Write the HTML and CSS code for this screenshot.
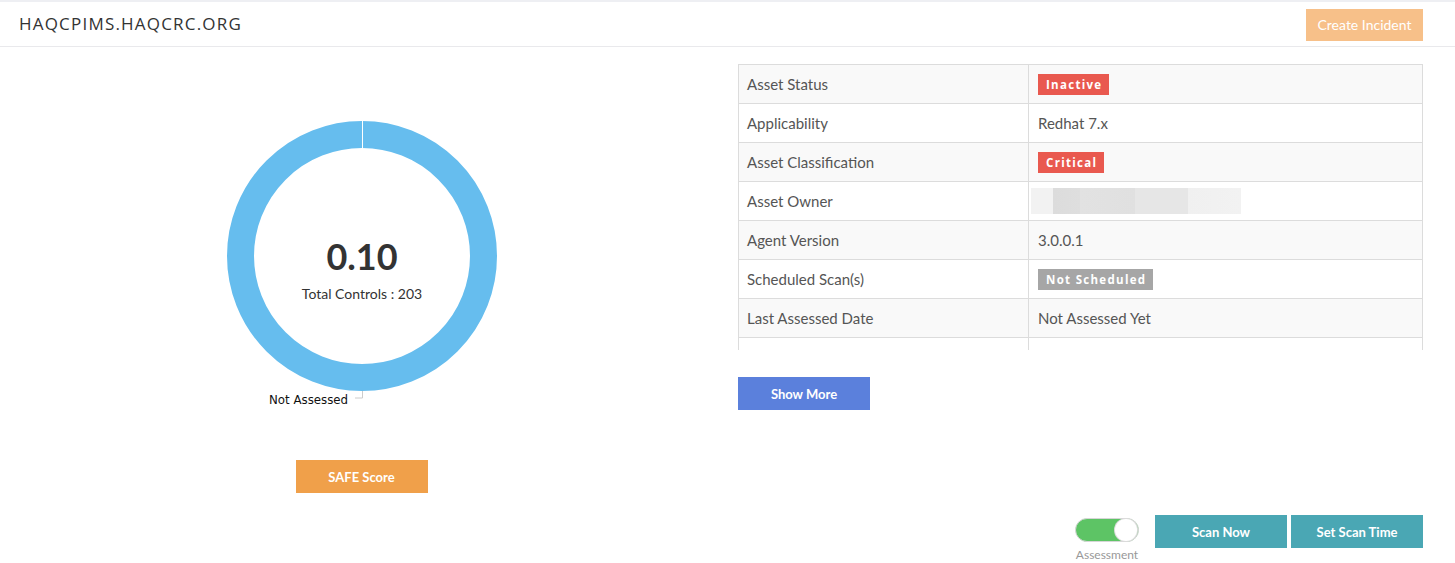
FILE: index.html
```html
<!DOCTYPE html>
<html>
<head>
<meta charset="utf-8">
<link rel="stylesheet" href="styles.css">
</head>
<body>
<div class="topband"></div>
<header class="header">
  <h1 class="title">HAQCPIMS.HAQCRC.ORG</h1>
  <button class="btn btn-incident">Create Incident</button>
</header>
<main class="main">
  <section class="left-col">
    <svg class="donut" width="270" height="290" viewBox="0 0 270 290">
      <circle cx="135" cy="135" r="121.5" fill="none" stroke="#66bdee" stroke-width="27"/>
      <line x1="135.5" y1="0" x2="135.5" y2="27" stroke="#ffffff" stroke-width="1"/>
      <text class="score" x="135" y="149" text-anchor="middle">0.10</text>
      <text class="total" x="135" y="178" text-anchor="middle">Total Controls : 203</text>
      <polyline points="135.5,270 135.5,277 128,277" fill="none" stroke="#cccccc" stroke-width="1"/>
      <text class="legend" x="42" y="283">Not Assessed</text>
    </svg>
    <button class="btn btn-safe">SAFE Score</button>
  </section>
  <section class="right-col">
    <div class="table-wrap">
      <table class="info">
        <tr><td class="k">Asset Status</td><td><span class="badge badge-red">Inactive</span></td></tr>
        <tr><td class="k">Applicability</td><td>Redhat 7.x</td></tr>
        <tr><td class="k">Asset Classification</td><td><span class="badge badge-red">Critical</span></td></tr>
        <tr><td class="k">Asset Owner</td><td class="owner-cell"><div class="blur"></div></td></tr>
        <tr><td class="k">Agent Version</td><td>3.0.0.1</td></tr>
        <tr><td class="k">Scheduled Scan(s)</td><td><span class="badge badge-gray">Not Scheduled</span></td></tr>
        <tr><td class="k">Last Assessed Date</td><td>Not Assessed Yet</td></tr>
        <tr><td class="k">&nbsp;</td><td>&nbsp;</td></tr>
      </table>
    </div>
    <button class="btn btn-more">Show More</button>
  </section>
</main>
<footer class="footer">
  <div class="toggle-group">
    <div class="toggle"><span class="knob"></span></div>
    <span class="toggle-label">Assessment</span>
  </div>
  <button class="btn btn-scan">Scan Now</button>
  <button class="btn btn-scan">Set Scan Time</button>
</footer>
</body>
</html>
```
FILE: styles.css
```css
* { box-sizing: border-box; }
html, body { margin: 0; padding: 0; background: #ffffff; }
body { font-family: "Lato", "Liberation Sans", sans-serif; color: #555; width: 1455px; height: 563px; overflow: hidden; }

.topband { height: 2px; background: #eeeff3; }

.header {
  height: 45px;
  border-bottom: 1px solid #e9e9ec;
  display: flex;
  align-items: center;
  justify-content: space-between;
  padding: 0 32px 0 19px;
}
.title {
  margin: 0;
  font-family: "Open Sans", "DejaVu Sans", sans-serif;
  font-weight: 400;
  font-size: 17px;
  letter-spacing: 1.2px;
  color: #333;
  padding-bottom: 1px;
}

.btn {
  border: none;
  color: #fff;
  font-family: "Lato", "Liberation Sans", sans-serif;
  font-size: 13px;
  font-weight: 700;
  height: 33px;
  width: 132px;
  padding: 0;
  cursor: pointer;
}
.btn-incident {
  background: #f7c089;
  width: 117px;
  height: 32px;
  font-size: 14px;
  font-weight: 400;
  margin-top: 1px;
}
.btn-safe { background: #f0a04a; margin-top: 49px; }
.btn-more { background: #5b80dc; margin-top: 27px; }
.btn-scan { background: #4aa7b4; }

.main {
  display: flex;
  gap: 15px;
  padding-top: 17px;
}
.left-col {
  width: 723px;
  display: flex;
  flex-direction: column;
  align-items: center;
}
.donut { display: block; margin-top: 57px; }
.score { font-family: "Lato", sans-serif; font-weight: 700; font-size: 36px; fill: #333; }
.total { font-family: "Lato", sans-serif; font-size: 14px; fill: #333; }
.legend { font-family: "DejaVu Sans", "Liberation Sans", sans-serif; font-size: 11.8px; fill: #111; }

.right-col {
  width: 685px;
  display: flex;
  flex-direction: column;
}
.table-wrap {
  height: 286px;
  overflow: hidden;
}
.info {
  width: 685px;
  border-collapse: collapse;
  font-size: 15px;
  color: #555;
}
.info td {
  border: 1px solid #dcdcdc;
  height: 39px;
  padding: 0 9px;
  vertical-align: middle;
  white-space: nowrap;
}
.info td.k { width: 290px; padding-left: 8px; }
.info tr:nth-child(odd) td { background: #f9f9f9; }
.owner-cell { padding-left: 2px !important; }

.badge {
  display: inline-block;
  color: #fff;
  font-family: "Open Sans", "DejaVu Sans", sans-serif;
  font-weight: 700;
  font-size: 11.5px;
  letter-spacing: 1.3px;
  line-height: 21px;
  height: 21px;
  padding: 0 7px 0 8px;
  vertical-align: middle;
}
.badge-red { background: #e9594f; }
.badge-gray { background: #a6a6a6; }

.blur {
  width: 210px;
  height: 26px;
  background: linear-gradient(90deg, #f2f2f2 0, #f2f2f2 22px, #dcdcdc 22px, #dedede 49px, #e2e2e2 49px, #e0e0e0 104px, #e6e6e6 104px, #e6e6e6 157px, #f0f0f0 157px, #f2f2f2 210px);
  filter: blur(0.4px);
}

.footer {
  display: flex;
  justify-content: flex-end;
  align-items: flex-start;
  gap: 4px;
  padding-right: 32px;
  margin-top: 22px;
}
.toggle-group {
  display: flex;
  flex-direction: column;
  align-items: center;
  margin-right: 12px;
  padding-top: 3px;
  width: 64px;
}
.toggle {
  width: 64px;
  height: 24px;
  border-radius: 12px;
  background: #5dc465;
  border: 1px solid #d6d6d6;
  display: flex;
  justify-content: flex-end;
  align-items: center;
  padding-right: 1px;
}
.knob {
  width: 22px;
  height: 22px;
  border-radius: 50%;
  background: #fff;
  box-shadow: 0 0 0 1px #dcdcdc;
}
.toggle-label {
  font-family: "Lato", sans-serif;
  font-size: 12px;
  color: #999;
  margin-top: 6px;
  line-height: 14px;
}
```
